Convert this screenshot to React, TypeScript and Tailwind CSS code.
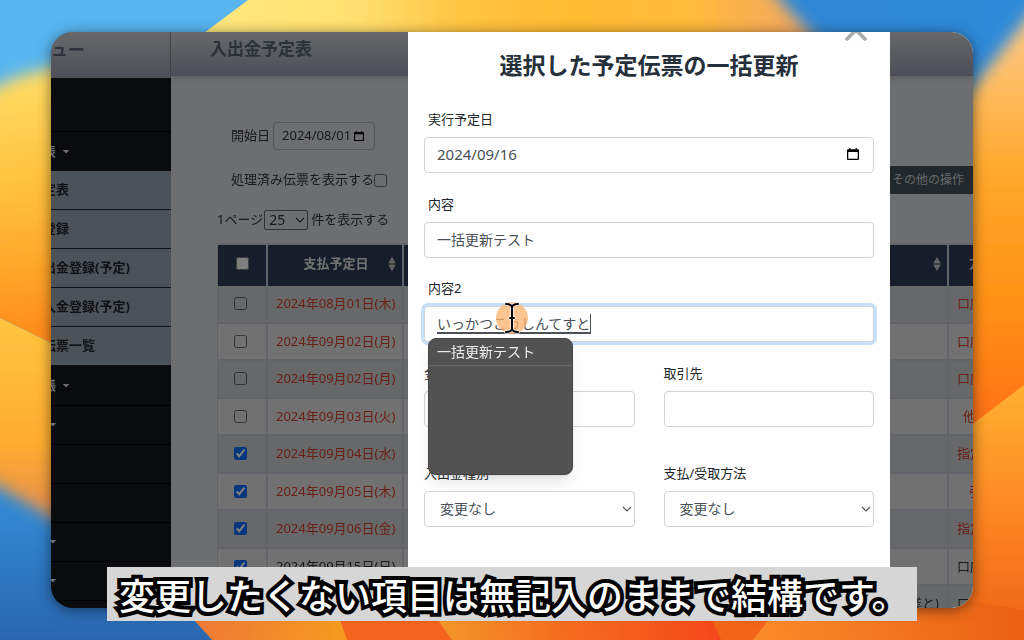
import clsx from "clsx";

type Row = {
  date: string;
  checked: boolean;
  method: string;
  pad?: string;
  settled?: boolean;
  note?: string;
};

const rows: Row[] = [
  { date: "2024年08月01日(木)", checked: false, method: "口座" },
  { date: "2024年09月02日(月)", checked: false, method: "口座" },
  { date: "2024年09月02日(月)", checked: false, method: "口座" },
  { date: "2024年09月03日(火)", checked: false, method: "他", pad: "pl-3.5" },
  { date: "2024年09月04日(水)", checked: true, method: "指定" },
  { date: "2024年09月05日(木)", checked: true, method: "引", pad: "pl-5" },
  { date: "2024年09月06日(金)", checked: true, method: "指定" },
  { date: "2024年09月15日(日)", checked: true, method: "口座", settled: true },
  { date: "2024年09月16日(月)", checked: true, method: "口座", settled: true, note: "業と)" },
];

function Wallpaper() {
  return (
    <svg
      className="absolute inset-0 size-full"
      viewBox="0 0 1024 640"
      preserveAspectRatio="none"
      aria-hidden="true"
    >
      <defs>
        <linearGradient id="sky" x1="0" y1="0" x2="1" y2="0">
          <stop offset="0" stopColor="#58b5f0" />
          <stop offset="0.3" stopColor="#58b5f0" />
          <stop offset="0.8" stopColor="#2f86d4" />
          <stop offset="1" stopColor="#2f8ad9" />
        </linearGradient>
        <linearGradient id="top" gradientUnits="userSpaceOnUse" x1="204" y1="0" x2="820" y2="0">
          <stop offset="0" stopColor="#ffe97e" />
          <stop offset="0.25" stopColor="#ffe070" />
          <stop offset="0.42" stopColor="#ffc440" />
          <stop offset="0.6" stopColor="#ffba32" />
          <stop offset="0.8" stopColor="#ffb93c" />
          <stop offset="1" stopColor="#eea468" />
        </linearGradient>
        <linearGradient id="left" gradientUnits="userSpaceOnUse" x1="0" y1="70" x2="30" y2="340">
          <stop offset="0" stopColor="#ffde68" />
          <stop offset="0.45" stopColor="#ffc03c" />
          <stop offset="0.75" stopColor="#ffa528" />
          <stop offset="1" stopColor="#ff8a1c" />
        </linearGradient>
        <linearGradient id="leftLow" gradientUnits="userSpaceOnUse" x1="0" y1="320" x2="0" y2="510">
          <stop offset="0" stopColor="#ffc440" />
          <stop offset="0.65" stopColor="#ffac30" />
          <stop offset="1" stopColor="#e8914a" />
        </linearGradient>
        <linearGradient id="sea" gradientUnits="userSpaceOnUse" x1="0" y1="490" x2="0" y2="640">
          <stop offset="0" stopColor="#338dd6" />
          <stop offset="1" stopColor="#2a66b0" />
        </linearGradient>
        <linearGradient id="right" gradientUnits="userSpaceOnUse" x1="0" y1="40" x2="0" y2="425">
          <stop offset="0" stopColor="#ffc67c" />
          <stop offset="0.35" stopColor="#ffa82a" />
          <stop offset="0.7" stopColor="#ff9015" />
          <stop offset="1" stopColor="#ff7018" />
        </linearGradient>
        <linearGradient id="rightLow" gradientUnits="userSpaceOnUse" x1="0" y1="400" x2="0" y2="640">
          <stop offset="0" stopColor="#ffac30" />
          <stop offset="0.5" stopColor="#fc8422" />
          <stop offset="1" stopColor="#ec6216" />
        </linearGradient>
        <linearGradient id="ember" gradientUnits="userSpaceOnUse" x1="190" y1="0" x2="350" y2="0">
          <stop offset="0" stopColor="#ee7838" />
          <stop offset="1" stopColor="#f59c1e" />
        </linearGradient>
        <linearGradient id="flame" gradientUnits="userSpaceOnUse" x1="440" y1="0" x2="720" y2="0">
          <stop offset="0" stopColor="#f2962a" />
          <stop offset="0.4" stopColor="#f57020" />
          <stop offset="1" stopColor="#f4481a" />
        </linearGradient>
        <linearGradient id="dusk" gradientUnits="userSpaceOnUse" x1="753" y1="0" x2="1024" y2="0">
          <stop offset="0" stopColor="#fa8c2a" />
          <stop offset="1" stopColor="#ea6014" />
        </linearGradient>
        <filter id="soft" x="-20%" y="-20%" width="140%" height="140%">
          <feGaussianBlur stdDeviation="8" />
        </filter>
        <clipPath id="topEdge">
          <path d="M248 0L180 51H1024V0Z" />
        </clipPath>
        <clipPath id="leftEdge">
          <path d="M0 318L300 464V640H0Z" />
        </clipPath>
      </defs>
      <rect width="1024" height="640" fill="url(#sky)" />
      <g clipPath="url(#topEdge)">
        <path d="M100 -60V100H870L780 0L740 -60Z" fill="url(#top)" filter="url(#soft)" />
      </g>
      <path d="M-60 115L0 85Q30 68 120 56V400H-60Z" fill="url(#left)" filter="url(#soft)" />
      <g clipPath="url(#leftEdge)">
        <rect y="300" width="300" height="340" fill="url(#sea)" />
        <path d="M-60 250H120V558L0 487L-60 455Z" fill="url(#leftLow)" filter="url(#soft)" />
      </g>
      <path d="M1100 -70L1024 22L960 104V480H1100Z" fill="url(#right)" filter="url(#soft)" />
      <path d="M1024 385L940 449V640H1024Z" fill="url(#rightLow)" />
      <path d="M176 600L212 640H360V600Z" fill="url(#ember)" />
      <path d="M333 600L347 640H470V600Z" fill="#f4641e" />
      <path d="M424 600L452 640H730V600Z" fill="url(#flame)" />
      <path d="M703 600L721 640H770V600Z" fill="#f2641a" />
      <path d="M784 600L753 640H1024V610L960 600Z" fill="url(#dusk)" />
    </svg>
  );
}

function Caret({ className }: { className?: string }) {
  return (
    <svg className={clsx("h-1 w-2", className)} viewBox="0 0 8 4" fill="currentColor">
      <path d="M0.8 0H7.2L4 3.6Z" />
    </svg>
  );
}

function SortIcon() {
  return (
    <svg className="h-4 w-2 shrink-0" viewBox="0 0 8 16" fill="#c8c8c8">
      <path d="M4 1L7.8 7.4H0.2ZM4 15L0.2 8.6H7.8Z" />
    </svg>
  );
}

function CalendarIcon({ className }: { className?: string }) {
  return (
    <svg className={clsx("shrink-0", className)} viewBox="0 0 12 12">
      <path
        d="M1 1.2H2.2V0H3.4V1.2H8.6V0H9.8V1.2H11Q12 1.2 12 2.2V11Q12 12 11 12H1Q0 12 0 11V2.2Q0 1.2 1 1.2ZM1.3 4V10.7H10.7V4Z"
        fillRule="evenodd"
      />
    </svg>
  );
}

function Chevron({ className }: { className?: string }) {
  return (
    <svg
      className={clsx("pointer-events-none h-2 w-3", className)}
      viewBox="0 0 12 8"
      fill="none"
      stroke="currentColor"
      strokeWidth="1.2"
    >
      <path d="M2 2L6 6L10 2" />
    </svg>
  );
}

function Sidebar() {
  return (
    <nav className="flex w-[120px] shrink-0 flex-col overflow-hidden bg-[#14161a] text-[13px] font-bold">
      <div className="h-[46px] shrink-0 border-r border-[#888b92] bg-linear-to-b from-[#d0d1d4] to-[#989ead] text-[17px] leading-[36px] text-[#5a6474]">
        ュー
      </div>
      <div className="h-[54px] shrink-0 border-b border-black" />
      <button className="-ml-2 flex h-[39px] shrink-0 items-center text-left text-[#dcdcdc]">
        表
        <Caret className="ml-1.5" />
      </button>
      {["定表", "登録", "出金登録(予定)", "入金登録(予定)", "伝票一覧"].map((item) => (
        <a
          key={item}
          href="#"
          className="flex h-[39px] shrink-0 items-center border-b border-[#20242c] bg-[#98a4b0] text-[#20242c]"
        >
          <span className="-ml-2">{item}</span>
        </a>
      ))}
      <button className="-ml-2 flex h-[39px] shrink-0 items-center text-left text-[#dcdcdc]">
        帳
        <Caret className="ml-1.5" />
      </button>
      {[true, false, false, true, true, false].map((caret, i) => (
        <div key={i} className="flex h-[39px] shrink-0 items-center border-t border-black text-[#dcdcdc]">
          {caret && <Caret className="-ml-0.5" />}
        </div>
      ))}
    </nav>
  );
}

function ScheduleTable() {
  const cell = "border-r-2 border-b-2 border-[#c4c8d2]";
  return (
    <table className="mt-[13px] w-full table-fixed border-separate border-spacing-0 border-t-2 border-l border-[#c4c8d2] text-[13px]">
      <thead>
        <tr className="h-[41px] bg-[#2e3a56] text-[#e4e4e4]">
          <th className="w-[50px] border-r-2 border-[#c4c8d2] pb-1.5 align-middle">
            <input type="checkbox" aria-label="すべて選択" className="align-middle" />
          </th>
          <th className="w-[136px] border-r-2 border-[#c4c8d2] pb-1">
            <div className="flex items-center pr-1.5 pl-4">
              <span className="flex-1 text-center">支払予定日</span>
              <SortIcon />
            </div>
          </th>
          <th className="border-r-2 border-[#c4c8d2] pb-1">
            <div className="flex justify-end pr-1.5">
              <SortIcon />
            </div>
          </th>
          <th className="w-[24px] overflow-hidden pb-1 pl-5 text-left whitespace-nowrap">方</th>
        </tr>
      </thead>
      <tbody>
        {rows.map((row, i) => (
          <tr
            key={i}
            className={clsx(
              "odd:h-[38px] odd:bg-[#cfd1d4] even:h-[37px] even:bg-[#e3e3e3]",
              row.settled ? "text-[#30343a]" : "text-[#d4402c]",
            )}
          >
            <td className={clsx(cell, "pr-1 pb-0.5 text-center")}>
              <input
                type="checkbox"
                aria-label={row.date}
                defaultChecked={row.checked}
                className={clsx("align-middle accent-[#0d6efd]", !row.checked && "mix-blend-multiply")}
              />
            </td>
            <td className={clsx(cell, "pl-2 whitespace-nowrap")}>{row.date}</td>
            <td className={clsx(cell, "pr-2 text-right")}>{row.note}</td>
            <td
              className={clsx(
                "overflow-hidden border-b-2 border-[#c4c8d2] whitespace-nowrap",
                row.pad ?? "pl-2",
              )}
            >
              {row.method}
            </td>
          </tr>
        ))}
      </tbody>
    </table>
  );
}

function Schedule() {
  return (
    <main className="flex min-w-0 flex-1 flex-col bg-[#dadce0] text-[#30343a]">
      <header className="h-11 shrink-0 bg-linear-to-b from-[#d0d1d4] to-[#989ead] pl-[39px] text-[17px] leading-[34px] font-bold text-[#57646e] shadow-md">
        入出金予定表
      </header>
      <div className="flex flex-col pt-[46px] pl-[46px] text-[13px]">
        <div className="flex h-7 items-center pl-3.5">
          <label htmlFor="start">開始日</label>
          <div className="ml-[3px] flex h-7 w-[102px] items-center rounded-sm border border-[#a8acb4] pr-2.5 pl-2">
            <input id="start" defaultValue="2024/08/01" className="w-full min-w-0 outline-none" />
            <CalendarIcon className="size-2.5" />
          </div>
        </div>
        <label className="mt-5 flex h-5 items-center pl-3.5">
          処理済み伝票を表示する
          <input type="checkbox" className="mix-blend-multiply" />
        </label>
        <div className="mt-5 flex h-5 items-center">
          <label htmlFor="size">1ページ</label>
          <div className="relative mr-[3px] ml-px flex">
            <select
              id="size"
              className="h-5 w-11 appearance-none rounded-xs border border-[#60646c] pl-1 text-[14px] leading-none"
            >
              <option>25</option>
            </select>
            <Chevron className="absolute top-1.5 right-0.5" />
          </div>
          件を表示する
        </div>
        <ScheduleTable />
      </div>
    </main>
  );
}

const control =
  "h-9 w-full rounded border border-[#ced4da] bg-white px-3 pb-0.5 text-[14px] text-[#495057] outline-none";

function SelectField({ id, label }: { id: string; label: string }) {
  return (
    <div className="flex flex-1 flex-col">
      <label htmlFor={id} className="leading-5">
        {label}
      </label>
      <div className="relative mt-2 flex">
        <select id={id} className={clsx(control, "appearance-none pl-[15px]")}>
          <option>変更なし</option>
        </select>
        <Chevron className="absolute top-3.5 right-0.5 text-[#555]" />
      </div>
    </div>
  );
}

function Pointer() {
  const beam = "M2 2Q8 2 8 6Q8 2 14 2M8 6V26M2 30Q8 30 8 26Q8 30 14 30M6 16H10";
  return (
    <div className="pointer-events-none absolute -top-1 left-[72px] flex size-8 items-center justify-center rounded-full bg-[#fdb06a]/75">
      <svg className="h-8 w-4 overflow-visible" viewBox="0 0 16 32" fill="none" strokeLinecap="round">
        <path d={beam} stroke="white" strokeWidth="3.4" />
        <path d={beam} stroke="black" strokeWidth="2" />
      </svg>
    </div>
  );
}

function Suggestions() {
  return (
    <div className="absolute top-8 left-1 z-10 h-[137px] w-[145px] rounded-lg border border-[#444] bg-[#525252] shadow-lg">
      <div className="border-b border-[#666] pl-2 text-[14px] leading-[26px] text-[#eee]">一括更新テスト</div>
    </div>
  );
}

function BulkUpdateDialog() {
  return (
    <div
      role="dialog"
      aria-labelledby="dialog-title"
      className="relative h-full w-[482px] bg-white px-4 text-[13px] text-[#212529]"
    >
      <button aria-label="閉じる" className="absolute -top-3.5 right-[22px] text-[#a5adad]">
        <svg
          className="size-6"
          viewBox="0 0 24 24"
          fill="none"
          stroke="currentColor"
          strokeWidth="3.6"
          strokeLinecap="round"
        >
          <path d="M3 3L21 21M21 3L3 21" />
        </svg>
      </button>
      <h2 id="dialog-title" className="pt-4 text-center text-[23px] leading-[34px] font-bold text-[#26303a]">
        選択した予定伝票の一括更新
      </h2>
      <div className="mt-[27px] flex flex-col">
        <label htmlFor="date" className="pl-1 leading-5">
          実行予定日
        </label>
        <div className={clsx(control, "mt-2 flex items-center")}>
          <input id="date" defaultValue="2024/09/16" className="min-w-0 flex-1 text-[15px] outline-none" />
          <CalendarIcon className="mr-0.5 size-3 text-black" />
        </div>
      </div>
      <div className="mt-[21px] flex flex-col">
        <label htmlFor="content" className="pl-1 leading-5">
          内容
        </label>
        <input id="content" defaultValue="一括更新テスト" className={clsx(control, "mt-2")} />
      </div>
      <div className="mt-5 flex flex-col">
        <label htmlFor="content2" className="pl-1 leading-5">
          内容2
        </label>
        <div className="relative mt-2">
          <input
            id="content2"
            defaultValue="いっかつこうしんてすと"
            className={clsx(control, "border-[#9fcbf0] ring-3 ring-[#c5dff8]")}
          />
          {/* IME composition underline and text caret */}
          <span className="pointer-events-none absolute top-2 left-[13px] h-5 w-[154px] border-r border-b-2 border-[#495057]" />
          <Pointer />
          <Suggestions />
        </div>
      </div>
      <div className="mt-[21px] flex gap-[29px]">
        <div className="flex flex-1 flex-col">
          <label htmlFor="amount" className="leading-5">
            金額
          </label>
          <input id="amount" className={clsx(control, "mt-2")} />
        </div>
        <div className="flex flex-1 flex-col">
          <label htmlFor="partner" className="leading-5">
            取引先
          </label>
          <input id="partner" className={clsx(control, "mt-2")} />
        </div>
      </div>
      <div className="mt-9 flex gap-[29px]">
        <SelectField id="kind" label="入出金種別" />
        <SelectField id="method" label="支払/受取方法" />
      </div>
    </div>
  );
}

export default function App() {
  return (
    <div className="relative h-screen overflow-hidden px-[51px] py-8 font-['Noto_Sans','Noto_Sans_CJK_JP',sans-serif]">
      <Wallpaper />
      <div className="relative flex h-full overflow-hidden rounded-[22px] shadow-[0_2px_14px_rgba(0,0,0,0.5)]">
        <Sidebar />
        <Schedule />
        <button className="absolute top-[134px] right-0 h-7 w-[83px] bg-[#465058] pl-0.5 text-left text-[12px] text-[#d0d0d0]">
          その他の操作
        </button>
        <div className="absolute inset-0 flex justify-end bg-black/50 pr-[83px]">
          <BulkUpdateDialog />
        </div>
      </div>
      <p className="absolute inset-x-[107px] bottom-[19px] h-[54px] bg-[#d6d6d6] pl-3 text-[36px] leading-[60px] font-medium whitespace-nowrap text-white [-webkit-text-stroke:8px_black] [paint-order:stroke_fill]">
        変更したくない項目は無記入のままで結構です。
      </p>
    </div>
  );
}
